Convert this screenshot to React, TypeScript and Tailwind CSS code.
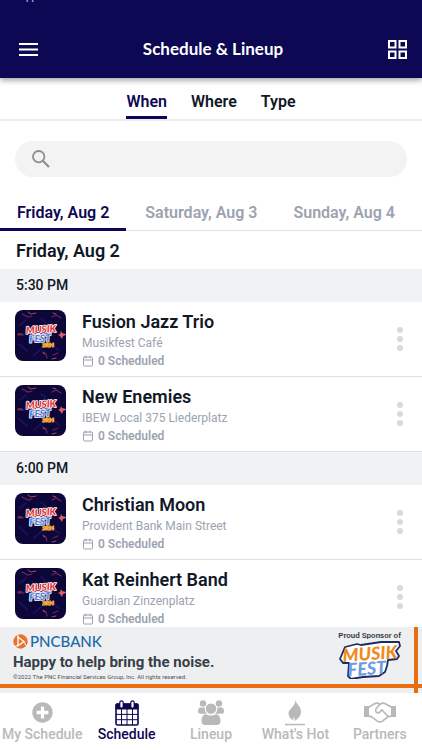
import { useState } from 'react';
import { FaPlusCircle } from 'react-icons/fa';
import { Calendar } from 'lucide-react';

const views = ['When', 'Where', 'Type'];

const days = ['Friday, Aug 2', 'Saturday, Aug 3', 'Sunday, Aug 4'];

const slots = [
  {
    time: '5:30 PM',
    events: [
      { name: 'Fusion Jazz Trio', venue: 'Musikfest Café', scheduled: 0 },
      { name: 'New Enemies', venue: 'IBEW Local 375 Liederplatz', scheduled: 0 },
    ],
  },
  {
    time: '6:00 PM',
    events: [
      { name: 'Christian Moon', venue: 'Provident Bank Main Street', scheduled: 0 },
      { name: 'Kat Reinhert Band', venue: 'Guardian Zinzenplatz', scheduled: 0 },
    ],
  },
];

function MenuIcon() {
  return (
    <svg width="19" height="13" viewBox="0 0 19 13" fill="currentColor" aria-hidden="true">
      <path d="M0 0h19v2H0zM0 5.5h19v2H0zM0 11h19v2H0z" />
    </svg>
  );
}

function GridIcon() {
  return (
    <svg width="19" height="19" viewBox="0 0 19 19" fill="none" stroke="currentColor" strokeWidth="2" aria-hidden="true">
      <path d="M1 1h6.5v6.5H1zM11.5 1H18v6.5h-6.5zM1 11.5h6.5V18H1zM11.5 11.5H18V18h-6.5z" />
    </svg>
  );
}

function SearchIcon() {
  return (
    <svg width="18" height="18" viewBox="0 0 18 18" fill="none" stroke="currentColor" strokeWidth="1.8" aria-hidden="true">
      <circle cx="6.7" cy="6.7" r="5.7" />
      <path d="M10.8 10.8l6.2 6.2" strokeWidth="2.2" />
    </svg>
  );
}

function ScheduleIcon() {
  return (
    <svg width="24" height="26" viewBox="0 0 24 26" fill="none" stroke="currentColor" aria-hidden="true">
      <rect x="1" y="4" width="22" height="21" rx="1.5" strokeWidth="1.6" />
      <path d="M1 4h22v5H1z" fill="currentColor" />
      <path d="M6.5 9v16M12 9v16M17.5 9v16M1 14.4h22M1 19.7h22" strokeWidth="1" />
      <path d="M6.5 2.6v3.6M17.5 2.6v3.6" strokeWidth="4.6" strokeLinecap="round" />
      <path d="M6.5 2.6v3.8M17.5 2.6v3.8" stroke="#fff" strokeWidth="2.2" strokeLinecap="round" />
    </svg>
  );
}

function LineupIcon() {
  return (
    <svg width="26" height="25" viewBox="0 0 26 25" fill="currentColor" aria-hidden="true">
      <circle cx="5" cy="3.4" r="3.2" />
      <circle cx="21" cy="3.4" r="3.2" />
      <path d="M2.6 7.5h4.2c-.3 2.7.5 4.7 2 6.2H2.3C.8 13.7 0 12.900 0 11.500c0-2.200.6-4 2.600-4z" />
      <path d="M23.400 7.500h-4.200c.3 2.700-.5 4.700-2 6.200h6.500c1.500 0 2.300-.8 2.300-2.200 0-2.200-.6-4-2.600-4z" />
      <circle cx="13" cy="8.700" r="5.700" stroke="#fff" strokeWidth="1" />
      <path d="M8.200 14.300c1.300.9 2.900 1.300 4.800 1.300s3.500-.4 4.800-1.300c3.400 0 4.700 3.500 4.700 7 0 2.300-1.300 3.700-3.600 3.700H7.100c-2.300 0-3.600-1.400-3.600-3.700 0-3.500 1.300-7 4.700-7z" />
    </svg>
  );
}

function HotIcon() {
  return (
    <svg width="20" height="26" viewBox="0 0 20 26" fill="currentColor" aria-hidden="true">
      <path d="M10.300 0c.5 3.500 5.700 6.500 5.700 11.500 0 4.500-3 7.300-6.600 9.500.4-1.700.3-2.700-.6-4-.5 1.200-.6 1.900-.4 3.200C5.300 18.800 3.500 16.500 3.500 13.500c0-5 7.300-7 6.800-13.500z" />
      <path d="M0 23.800h20v1.500H0z" />
    </svg>
  );
}

function PartnersIcon() {
  return (
    <svg width="32" height="21" viewBox="0 0 32 21" fill="none" stroke="currentColor" strokeWidth="1.7" strokeLinejoin="round" strokeLinecap="round" aria-hidden="true">
      <path d="M0 4h5v11H0zM27 4h5v11h-5z" fill="currentColor" stroke="none" />
      <path d="M5 5l5.500-3.200c1.800-1 3.500-.8 5.200.6M27 5l-5.500-3.200c-2-1.100-4-.8-5.500.5L12.300 6.500c-1.200 1.700-.7 3.700 1 4.200 2 .6 3.300-.7 4.500-3l5.600 6.100" />
      <path d="M5 14.300h2l6 4.600c1.800 1.300 3.700 1.400 5.400.2l6-4.800H27" />
    </svg>
  );
}

const tabs = [
  { label: 'My Schedule', icon: <FaPlusCircle size={21} aria-hidden="true" /> },
  { label: 'Schedule', icon: <ScheduleIcon /> },
  { label: 'Lineup', icon: <LineupIcon /> },
  { label: "What's Hot", icon: <HotIcon /> },
  { label: 'Partners', icon: <PartnersIcon /> },
];

function EventArt() {
  return (
    <svg viewBox="0 0 51 51" className="size-[51px] shrink-0 rounded-lg" role="img" aria-label="Musikfest 2024">
      <rect width="51" height="51" fill="#0c0738" />
      <g fill="none" strokeLinecap="round">
        <path d="M4 34l8 7M19 45l7-6M37 35l7 5M5 15l6-5M26 9l5 4" stroke="#1c1058" strokeWidth="2" />
        <path d="M7 4l6 3 4-1M37 7l4-2 5 3M28 42l3 2 1 4M38 45l5-2M3 25h6" stroke="#6b255f" strokeWidth="1.2" />
        <path d="M13 2l3 2 5-1M38 3l3 1M37 49l4-1M28 43l2 1M3 24h4" stroke="#b2484f" strokeWidth="1" />
      </g>
      <path d="M43 25l2-1 1-3 1 2 4 1v1l-3 1-1 3-2-3z" fill="#e35d67" />
      <g fontFamily="Lato, sans-serif" fontWeight="900" fontStyle="italic" strokeLinejoin="round" paintOrder="stroke" textAnchor="middle">
        <text x="26" y="23" fontSize="10" fill="#e5323d" stroke="#fff" strokeWidth="1.6" transform="rotate(-4 26 20)">MUSIK</text>
        <text x="25" y="32" fontSize="10" fill="#4c78d9" stroke="#fff" strokeWidth="1.6" transform="rotate(-4 25 30)">FEST</text>
        <text x="33" y="37" fontSize="5" fill="#ee7c28" stroke="#ffd24a" strokeWidth="1">2024</text>
      </g>
    </svg>
  );
}

function SponsorLogo() {
  return (
    <svg width="62" height="38" viewBox="0 0 62 38" role="img" aria-label="Musikfest">
      <path d="M6 6l12-3 4 1 20-3 18 0 1 4-4 5 3 5-2 3-9 1-1 6-2 6-6 4-16 1-12 2-3-3 1-13-6 0-3-4z" fill="#fff" stroke="#1c2c5e" strokeWidth="1.8" strokeLinejoin="round" />
      <g fontFamily="Lato, sans-serif" fontWeight="900" fontStyle="italic" textAnchor="middle">
        <text x="31" y="19" fontSize="18" fill="#f08a1d" transform="rotate(-4 31 14)">MUSIK</text>
        <text x="28" y="34" fontSize="18" fill="#6f9be0" transform="rotate(-4 28 28)">FEST</text>
      </g>
    </svg>
  );
}

function PncMark() {
  return (
    <svg width="15" height="15" viewBox="0 0 15 15" aria-hidden="true">
      <circle cx="7.5" cy="7.5" r="7.2" fill="#e8742c" />
      <path d="M5 3.300l6 4.200-6 4.200z" fill="none" stroke="#fff" strokeWidth="1.3" />
      <path d="M5 4V.8M10.500 7.500l3 4.500M5 11.500l-3.500 1" stroke="#fff" strokeWidth="1" />
    </svg>
  );
}

export default function App() {
  const [view, setView] = useState('When');
  const [day, setDay] = useState(days[0]);

  return (
    <div className="flex h-screen flex-col overflow-hidden bg-white font-[Roboto,sans-serif] text-[#111827]">
      {/* Header */}
      <header className="z-10 shrink-0 bg-[#0c0853] text-white shadow-[0_2px_6px_rgba(0,0,0,0.4)]">
        <div className="flex h-5 items-start overflow-hidden pl-3">
          <span className="-mt-2 text-[10px] leading-[10px] text-white/80">◂ App Store</span>
        </div>
        <div className="flex h-[58px] items-center justify-between pr-3 pl-4">
          <button aria-label="Menu" className="flex size-6 items-center justify-center">
            <MenuIcon />
          </button>
          <h1 className="font-[Lato,sans-serif] text-[17px] leading-6 font-bold">Schedule &amp; Lineup</h1>
          <button aria-label="Grid view" className="flex size-6 items-center justify-center">
            <GridIcon />
          </button>
        </div>
      </header>

      {/* View switch */}
      <nav className="flex h-[43px] shrink-0 justify-center gap-6 border-b-2 border-[#ececee] pt-3">
        {views.map((v) => (
          <button
            key={v}
            onClick={() => setView(v)}
            className={`h-[29px] border-b-3 pb-1 text-[16px] leading-6 font-semibold ${
              v === view ? 'border-[#0c0853] text-[#0c0853]' : 'border-transparent'
            }`}
          >
            {v}
          </button>
        ))}
      </nav>

      {/* Search */}
      <label className="mx-[15px] mt-5 flex h-9 shrink-0 items-center rounded-full bg-[#f3f3f3] px-[17px] text-[#8e8e8e]">
        <SearchIcon />
        <input type="search" aria-label="Search events" className="ml-3 min-w-0 flex-1 bg-transparent text-[16px] text-[#111827] outline-none" />
      </label>

      {/* Days */}
      <nav className="mt-[18px] flex h-9 shrink-0 gap-0.5 border-b border-[#e3e3e6]">
        {days.map((d) => (
          <button
            key={d}
            onClick={() => setDay(d)}
            className={`h-9 border-b-3 px-[17px] pt-0.5 text-[16px] leading-6 font-semibold whitespace-nowrap ${
              d === day ? 'border-[#0c0853] text-[#0c0853]' : 'border-transparent text-[#9ca3af]'
            }`}
          >
            {d}
          </button>
        ))}
      </nav>

      {/* Event list */}
      <main className="min-h-0 flex-1 overflow-hidden">
        <h2 className="px-4 pt-2 pb-1.5 text-[18px] leading-6 font-semibold">{day}</h2>
        {slots.map((slot) => (
          <section key={slot.time}>
            <h3 className="bg-[#f1f2f4] px-4 pt-1 pb-[5px] text-[14px] leading-6 font-medium">{slot.time}</h3>
            <ul>
              {slot.events.map((event) => (
                <li key={event.name} className="flex items-start border-b border-[#dedfe1] pt-2 pr-4 pb-1.5 pl-[15px]">
                  <EventArt />
                  <div className="ml-4 min-w-0 flex-1">
                    <h4 className="text-[18px] leading-6 font-semibold">{event.name}</h4>
                    <p className="text-[12px] leading-[18px] text-[#9ca3af]">{event.venue}</p>
                    <p className="flex items-center gap-1 text-[12px] leading-[18px] font-semibold text-[#9ca3af]">
                      <Calendar size={12} />
                      {event.scheduled} Scheduled
                    </p>
                  </div>
                  <button aria-label={`Options for ${event.name}`} className="mt-[17px] flex w-3 flex-col items-center gap-[3px]">
                    <span className="size-1.5 rounded-full bg-[#d9d9d9]" />
                    <span className="size-1.5 rounded-full bg-[#d9d9d9]" />
                    <span className="size-1.5 rounded-full bg-[#d9d9d9]" />
                  </button>
                </li>
              ))}
            </ul>
          </section>
        ))}
      </main>

      {/* Sponsor banner */}
      <a href="#sponsor" className="relative flex h-[66px] shrink-0 justify-between bg-[#eeeff1] pr-[21px] pl-[13px]">
        <div className="pt-1.5">
          <div className="flex items-center gap-0.5 text-[15px] leading-4 text-[#1769a8]">
            <PncMark />
            <span className="font-[Lato,sans-serif] font-medium">PNCBANK</span>
          </div>
          <p className="mt-1 text-[15px] leading-[18px] font-bold text-[#374049]">Happy to help bring the noise.</p>
          <p className="mt-0.5 text-[6px] leading-2 text-[#4b5259]">©2022 The PNC Financial Services Group, Inc. All rights reserved.</p>
        </div>
        <div className="flex flex-col items-center pt-1 text-[8px] leading-[10px] font-semibold text-[#333a42]">
          Proud Sponsor of
          <SponsorLogo />
        </div>
        <span className="absolute inset-x-0 bottom-[5px] h-1 bg-[#e86e12]" />
        <span className="absolute inset-y-0 right-1 w-1 bg-[#e86e12]" />
      </a>

      {/* Bottom tabs */}
      <nav className="grid h-[57px] shrink-0 grid-cols-5 bg-white">
        {tabs.map((tab) => (
          <a
            key={tab.label}
            href="#tab"
            className={`flex flex-col items-center pt-1.5 text-[14px] leading-4 font-medium whitespace-nowrap ${
              tab.label === 'Schedule' ? 'text-[#0c0853]' : 'text-[#b9b9b9]'
            }`}
          >
            <span className="flex h-[27px] items-center">{tab.icon}</span>
            {tab.label}
          </a>
        ))}
      </nav>
    </div>
  );
}
